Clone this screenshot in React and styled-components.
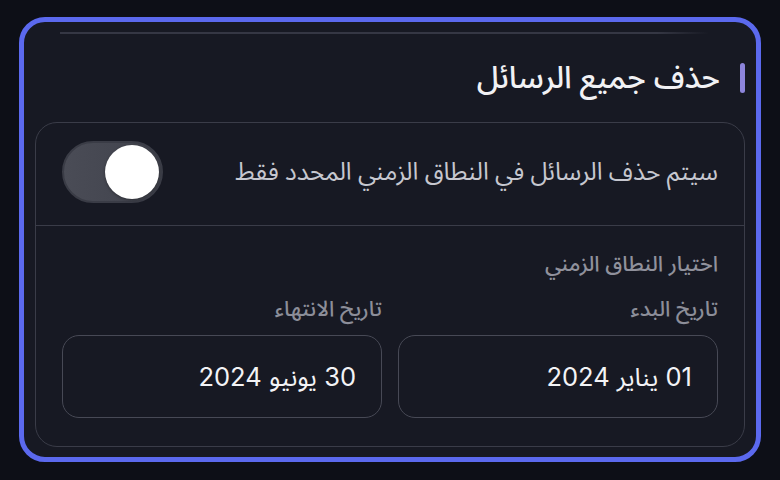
import React from 'react'
import styled, { createGlobalStyle } from 'styled-components'

const GlobalStyle = createGlobalStyle`
  html, body {
    margin: 0;
    padding: 0;
    background: #0d0f17;
  }
  body {
    font-family: "Noto Sans Arabic", "Noto Sans", "DejaVu Sans", sans-serif;
    -webkit-font-smoothing: antialiased;
  }
`

function App() {
  return (
    <>
      <GlobalStyle />
      <Page>
        <Card dir='rtl'>
          <TopRule />
          <TitleRow>
            <Accent />
            <Title>حذف جميع الرسائل</Title>
          </TitleRow>
          <Panel>
            <ToggleRow>
              <Description>سيتم حذف الرسائل في النطاق الزمني المحدد فقط</Description>
              <Switch on>
                <Knob />
              </Switch>
            </ToggleRow>
            <RangeSection>
              <SectionLabel>اختيار النطاق الزمني</SectionLabel>
              <Fields>
                <Field>
                  <FieldLabel>تاريخ البدء</FieldLabel>
                  <DateBox>01 يناير 2024</DateBox>
                </Field>
                <Field>
                  <FieldLabel>تاريخ الانتهاء</FieldLabel>
                  <DateBox>30 يونيو 2024</DateBox>
                </Field>
              </Fields>
            </RangeSection>
          </Panel>
        </Card>
      </Page>
    </>
  )
}

export default App

const Page = styled.div`
  width: 780px;
  height: 480px;
  padding: 17px 19px 0;
  box-sizing: border-box;
  overflow: hidden;
`

const Card = styled.div`
  width: 742px;
  height: 445px;
  box-sizing: border-box;
  border: 5px solid #5b69ee;
  border-radius: 26px;
  background: #171923;
  padding: 0 11px;
  display: flex;
  flex-direction: column;
`

const TopRule = styled.div`
  flex-shrink: 0;
  height: 1.5px;
  margin: 10px 36px 0 25px;
  background: linear-gradient(to left, transparent 0%, #353744 8%, #353744 100%);
`

const TitleRow = styled.div`
  flex-shrink: 0;
  display: flex;
  align-items: center;
  gap: 20px;
  height: 44px;
  margin-top: 22.5px;
  margin-bottom: 22px;
`

const Accent = styled.span`
  width: 5px;
  height: 30px;
  border-radius: 3px;
  background: #8d85dc;
`

const Title = styled.h2`
  margin: 0;
  font-size: 31px;
  line-height: 44px;
  font-weight: 500;
  color: #f1f1f4;
`

const Panel = styled.div`
  flex-shrink: 0;
  border: 1.5px solid #3a3c48;
  border-radius: 22px;
  background: #171923;
  overflow: hidden;
`

const ToggleRow = styled.div`
  display: flex;
  align-items: center;
  justify-content: space-between;
  padding: 17.5px 26px 22px;
  border-bottom: 1.5px solid #3a3c48;
`

const Description = styled.span`
  font-size: 24.5px;
  line-height: 32px;
  color: #c6c7cf;
`

const Switch = styled.div`
  width: 101px;
  height: 62px;
  box-sizing: border-box;
  border-radius: 31px;
  background: linear-gradient(to right, #4a4c56 0%, #444650 60%, #3e4049 100%);
  border: 2px solid #3a3c46;
  display: flex;
  align-items: center;
  justify-content: ${p => (p.on ? 'flex-start' : 'flex-end')};
  padding: 0 2px;
`

const Knob = styled.span`
  width: 54px;
  height: 54px;
  border-radius: 50%;
  background: #ffffff;
  box-shadow: 0 1px 3px rgba(0, 0, 0, 0.35);
`

const RangeSection = styled.div`
  padding: 23px 26px 28px;
`

const SectionLabel = styled.div`
  font-size: 21.5px;
  line-height: 30px;
  font-weight: 500;
  color: #90919c;
  margin-bottom: 15px;
`

const Fields = styled.div`
  display: grid;
  grid-template-columns: 1fr 1fr;
  gap: 16px;
`

const Field = styled.div`
  display: flex;
  flex-direction: column;
  gap: 11px;
`

const FieldLabel = styled.div`
  font-size: 21.5px;
  line-height: 30px;
  font-weight: 500;
  color: #8c8e99;
`

const DateBox = styled.div`
  height: 83px;
  box-sizing: border-box;
  border: 1.5px solid #474955;
  border-radius: 17px;
  display: flex;
  align-items: center;
  padding: 3px 25px 0;
  font-family: "Inter", "Noto Sans Arabic", "DejaVu Sans", sans-serif;
  font-size: 25.5px;
  color: #f3f3f6;
`
